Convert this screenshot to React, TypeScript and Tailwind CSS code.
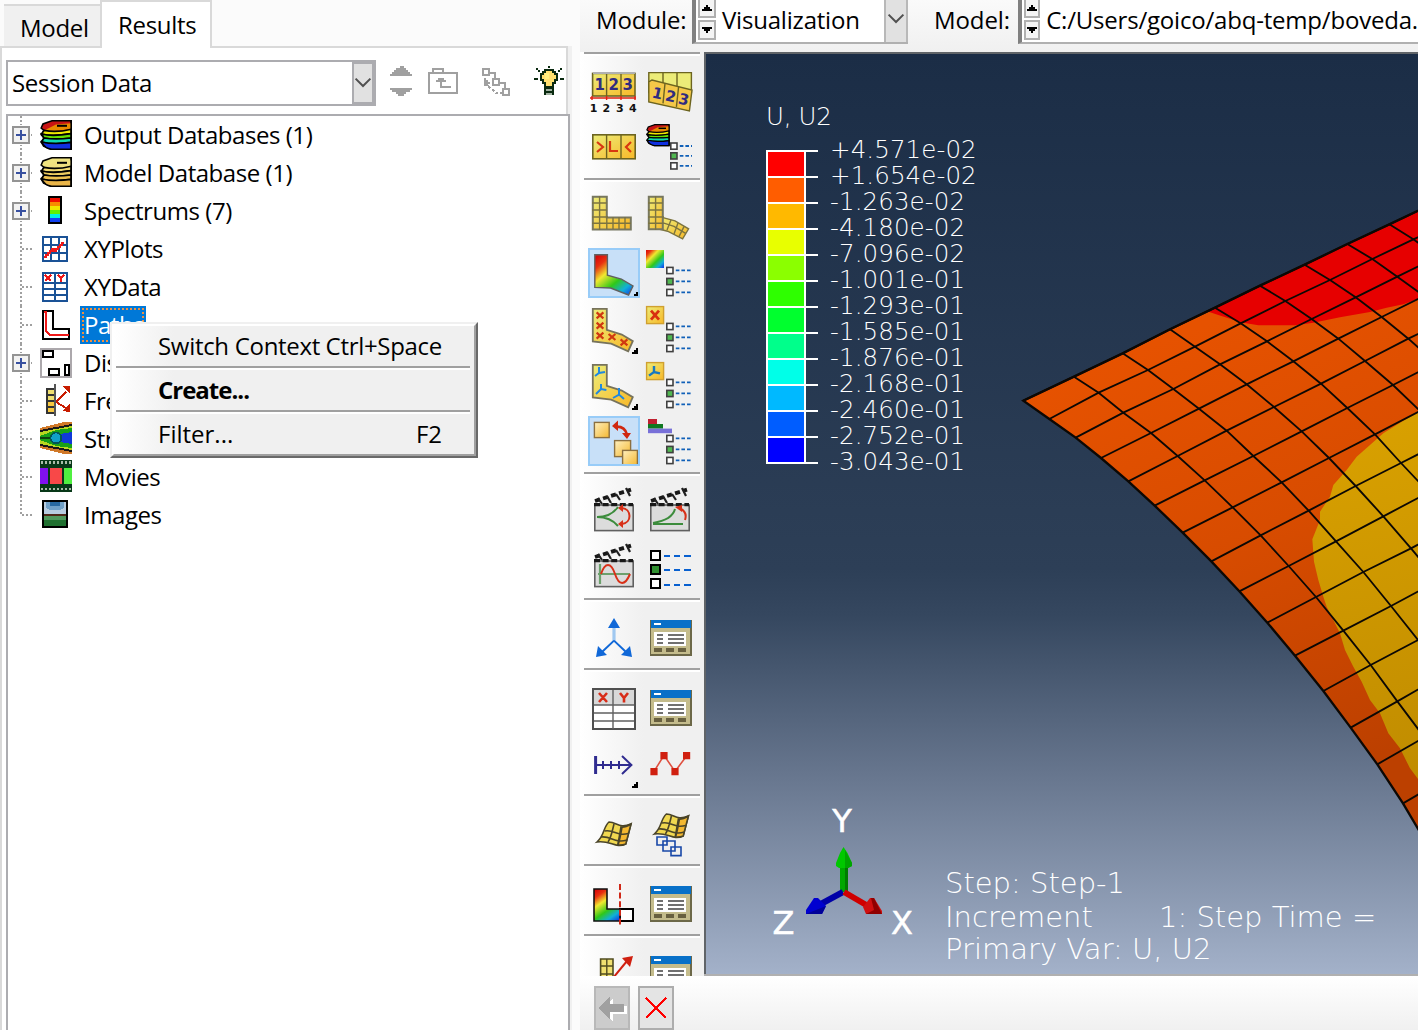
import React from "react";

type Pt = [number, number];

/* ---------- tree icons (16 x 16 grid, drawn at 2x) ---------- */

function TreeIcon({ children }: { children: React.ReactNode }) {
  return (
    <svg viewBox="0 0 16 16" className="mt-[2px] ml-[6px] h-8 w-8 shrink-0 overflow-visible" shapeRendering="crispEdges">
      {children}
    </svg>
  );
}

function DatabaseArt({ colors }: { colors: string[] }) {
  return (
    <g stroke="#000" strokeWidth="0.8" shapeRendering="auto">
      <path d="M15.6 .4H6L1.5 2 .6 4l1.4 1.2L.6 7.3 2 9 .6 11l1.2 2 3.6 1.6h10.2z" fill={colors[0]} />
      <path d="M2 5.2C5 6 9 5.6 15.6 4.4V1.6L8 2.2z" fill={colors[1]} stroke="none" />
      <path d="M.8 7c4 1 9 .7 14.8-.2V4.6C10 6 6 6 2 5.2z" fill={colors[2]} />
      <path d="M2 9c4 .8 8 .6 13.6 0V6.8C10 7.8 5 8.2 .8 7z" fill={colors[3]} />
      <path d="M.8 11c4 1 9 1 14.8.2V9C10 9.6 6 9.6 2 9z" fill={colors[4]} />
      <path d="M.8 11c1 2 3 3.4 5 3.6h9.8v-3.4C10 12 5 12 .8 11z" fill={colors[5]} />
      <path d="M8.5 2.4h5v1h-5z" fill="#000" stroke="none" />
      <path d="M15.6 .4v14.2" />
    </g>
  );
}

const RAINBOW_DB = ["#c81414", "#e88a00", "#f0e800", "#66e000", "#10d8b0", "#1030e0"];
const YELLOW_DB = ["#f0e480", "#f0e080", "#f0d870", "#eccb60", "#ecc050", "#eab548"];

const treeIcons: Record<string, React.ReactNode> = {
  odb: <DatabaseArt colors={RAINBOW_DB} />,
  mdb: <g transform="translate(0 -.5)"><DatabaseArt colors={YELLOW_DB} /></g>,
  spectrum: (
    <g>
      <path d="M4 0h7v14H4z" fill="#000" />
      <path d="M5 1h5v2H5z" fill="#f01000" />
      <path d="M5 3h5v2H5z" fill="#f88c00" />
      <path d="M5 5h5v2H5z" fill="#f0e800" />
      <path d="M5 7h5v2H5z" fill="#60f000" />
      <path d="M5 9h5v2H5z" fill="#00f0e0" />
      <path d="M5 11h5v2H5z" fill="#1040f0" />
    </g>
  ),
  xyplots: (
    <g fill="none">
      <path d="M1.5 1.5h12v12h-12zM5.5 1v13M9.5 1v13M1 5.5h13M1 9.5h13" stroke="#1a5296" />
      <path d="M2 11.5h1v-1h1v-1h1v-1h1v-1h1v1h1v-1h1v-1h1v-1h1v-1h1" stroke="#f01818" strokeWidth=".8" />
    </g>
  ),
  xydata: (
    <g fill="none">
      <path d="M1.5.5h12v14h-12zM7.5 0v15M1 5.5h13M1 8.5h13M1 11.5h13" stroke="#1a5296" />
      <path d="M2.5 1.5l3 3M5.500 1.500l-3 3M9 1.300l1.500 1.500L12 1.300M10.500 2.800v2" stroke="#f01818" />
    </g>
  ),
  path: (
    <g fill="#fff">
      <path d="M1.5.5h5v9h8v5h-13z" stroke="#000" />
      <path d="M2 1h1v9.500l2 2h9.500" stroke="#f01818" fill="none" strokeWidth=".9" />
    </g>
  ),
  display: (
    <g fill="#fff" stroke="#000">
      <path d="M.5.5h15v14H.5z" stroke="#aca8ac" />
      <path d="M1.500 1.500h5v3h-5zM4.500 10.500h5v3h-5zM12.500 8.500h2v5h-2z" />
    </g>
  ),
  freebody: (
    <g>
      <path d="M3 1h4v13H3z" fill="#333" />
      <path d="M4 2h3v2H4zM4 5h3v2H4z" fill="#f0e070" />
      <path d="M4 8h3v2H4zM4 11h3v2H4z" fill="#f8c840" />
      <path d="M7 -1h1v16H7z" fill="#555" />
      <path d="M8 8l5-5M8 8l5 3" stroke="#c81c00" strokeWidth=".9" />
      <path d="M11 0h4v4l-1.500-1.500zM11 12.500L15 9v4z" fill="#c81c00" />
    </g>
  ),
  streams: (
    <g>
      <path d="M0 2L12-1h4v16h-4L0 12z" fill="#d07828" />
      <path d="M0 3L16 0v14L0 11z" fill="#181818" />
      <path d="M0 4l16-3v12L0 10z" fill="#b8d820" />
      <path d="M0 6l8-3 8-1v10l-8-1-8-3z" fill="#18a018" />
      <path d="M10 5l6-1v6l-6-1z" fill="#1038d8" />
      <circle cx="8" cy="7" r="2.700" fill="#10a0c8" stroke="#055" strokeWidth=".8" />
      <path d="M0 7h5" stroke="#104010" strokeWidth=".7" />
    </g>
  ),
  movies: (
    <g>
      <path d="M0-1h16v16H0z" fill="#083818" />
      <path d="M.500.300h15M.500 13.400h15" stroke="#a8bca8" strokeWidth="1.200" strokeDasharray="1 1" />
      <path d="M0 3h4v8H0z" fill="#8010f0" />
      <path d="M5 3h6v8H5z" fill="#f84848" />
      <path d="M12 3h4v8h-4z" fill="#50f040" />
    </g>
  ),
  images: (
    <g>
      <path d="M1 0h13v14H1z" fill="#000" />
      <path d="M2 1h11v6H2z" fill="#b8cce0" />
      <path d="M3 1h9v3l-2 1H5L3 4z" fill="#70a0c8" />
      <path d="M5 1h5v2H5z" fill="#2868a0" />
      <path d="M2 7h11v1H2z" fill="#502818" />
      <path d="M2 8h11v2H2z" fill="#50985c" />
      <path d="M2 10h11v3H2z" fill="#207030" />
    </g>
  ),
};

const tree: { label: string; icon: string; plus?: boolean; selected?: boolean; track: string }[] = [
  { label: "Output Databases (1)", icon: "odb", plus: true, track: "tracking-[-0.45px]" },
  { label: "Model Database (1)", icon: "mdb", plus: true, track: "tracking-[-0.45px]" },
  { label: "Spectrums (7)", icon: "spectrum", plus: true, track: "tracking-[-0.45px]" },
  { label: "XYPlots", icon: "xyplots", track: "tracking-[-0.45px]" },
  { label: "XYData", icon: "xydata", track: "tracking-[-0.45px]" },
  { label: "Paths", icon: "path", selected: true, track: "tracking-[-0.45px]" },
  { label: "Display Groups", icon: "display", plus: true, track: "tracking-[-0.45px]" },
  { label: "Free Body Cuts", icon: "freebody", track: "tracking-[-0.45px]" },
  { label: "Streams", icon: "streams", track: "tracking-[-0.45px]" },
  { label: "Movies", icon: "movies", track: "tracking-[-0.45px]" },
  { label: "Images", icon: "images", track: "tracking-[-0.45px]" },
];

function TreeRow({ item, last }: { item: (typeof tree)[number]; last: boolean }) {
  return (
    <div className="flex h-[38px] items-center pl-1">
      <svg viewBox="0 0 13 19" className="h-[38px] w-[26px] shrink-0 -mr-1 overflow-visible" shapeRendering="crispEdges">
        <path d={last ? "M4.5 0V10" : "M4.500 0V19"} stroke="#a0a0a0" strokeDasharray="1 1" />
        <path d="M5 9.500h5" stroke="#a0a0a0" strokeDasharray="1 1" />
        {item.plus && (
          <g>
            <path d="M-.5 4.500H9.500V14.500H-.5z" fill="#fff" />
            <path d="M.5 5.500h8v8h-8z" fill="#f2f2f2" stroke="#949494" />
            <path d="M2 9.500h5M4.500 7v5" stroke="#3850a0" />
          </g>
        )}
      </svg>
      <TreeIcon>{treeIcons[item.icon]}</TreeIcon>
      {item.selected ? (
        <div className="ml-2 h-[38px] w-[66px] bg-[#0078d7] p-[2px]">
          <div className={`h-full border-2 border-dotted border-[#f09040] leading-[30px] text-white ${item.track}`}>
            {item.label}
          </div>
        </div>
      ) : (
        <span className={`ml-3 whitespace-nowrap ${item.track}`}>{item.label}</span>
      )}
    </div>
  );
}

/* ---------- left panel ---------- */

function Chevron() {
  return (
    <svg viewBox="0 0 9 6" className="h-3 w-[18px]" fill="none">
      <path d="M.8 .8L4.500 4.500 8.200.800" stroke="#505050" strokeWidth="1" />
    </svg>
  );
}

function ContextMenu() {
  return (
    <div className="absolute top-[322px] left-[110px] h-[136px] w-[368px] border-2 border-t-[#f0f0f0] border-r-[#696969] border-b-[#696969] border-l-[#f0f0f0]">
      <div className="flex h-full flex-col border-2 border-t-white border-r-[#a0a0a0] border-b-[#a0a0a0] border-l-white bg-linear-to-r from-white to-[#f0f0f0] to-[60px] pr-1">
        <div className="flex h-10 items-center justify-between pr-7 pl-11">
          <span className="tracking-[-0.3px]">Switch Context</span>
          <span className="tracking-[-0.3px]">Ctrl+Space</span>
        </div>
        <div className="ml-[2px] h-1 border-t-2 border-[#a0a0a0] bg-white" />
        <div className="flex h-10 items-center pl-11 font-bold tracking-[-1px]">Create...</div>
        <div className="ml-[2px] h-1 border-t-2 border-[#a0a0a0] bg-white" />
        <div className="flex h-10 items-center justify-between pr-7 pl-11">
          <span>Filter...</span>
          <span>F2</span>
        </div>
      </div>
    </div>
  );
}

function LeftPanel() {
  return (
    <div className="flex h-[1030px] w-[580px] shrink-0 flex-col bg-[#fbfbfb]">
      <div className="z-10 flex h-12 items-start pl-1">
        <div className="mt-1 flex h-[42px] w-24 items-center border-t-2 border-[#d9d9d9] bg-[#f0f0f0] pt-[3px] pl-4 tracking-[-0.3px]">Model</div>
        <div className="flex h-12 w-28 items-center border-2 border-b-0 border-[#d9d9d9] bg-white pl-4 tracking-[-0.3px]">Results</div>
      </div>
      <div className="-mt-[2px] flex h-[984px] w-[572px] border-r-4 border-[#f0f0f0]">
        <div className="flex w-[568px] flex-col border-t-2 border-l-2 border-[#d9d9d9] bg-white pl-1">
          <div className="flex h-[66px] items-start border-r-2 border-[#d9d9d9] pt-3">
            <div className="flex h-[46px] w-[370px] items-center justify-between border-2 border-[#acacb0] bg-white pl-1">
              <span className="tracking-[-0.3px]">Session Data</span>
              <div className="flex h-[42px] w-[22px] items-center justify-center border-2 border-t-[#acacb0] border-r-[#acacb0] border-b-[#acacb0] border-l-[#acacb0] bg-[#e1e1e1]">
                <Chevron />
              </div>
            </div>
            <svg viewBox="0 0 90 18" className="ml-2 h-9 w-[180px] overflow-visible" shapeRendering="crispEdges">
              <path d="M8 3h2v1h1v1h1v1h1v1h1v1H3V7h1V6h1V5h1V4h2zM3 14h11v1h-1v1h-2v1h-1v1H7v-1H6v-1H4v-1H3z" fill="#a0a0a0" transform="translate(0 0)" />
              <g fill="none" stroke="#a0a0a0">
                <path d="M22.500 6.500h14v10h-14zM24.500 6v-1.500h5v1.500" />
                <path d="M28.500 9v4.500h5M26 10.500h5M27 9.500h3" />
              </g>
              <g fill="none" stroke="#a0a0a0">
                <path d="M49.500 4.500h3v3h-3zM54.500 9.500h3v3h-3zM59.500 14.500h3v3h-3zM53 6.500h2.500v3M58 11.500h2.500v3" />
                <path d="M50 9h1v1h1v1h1v1h-1v1h-2z" fill="#a0a0a0" stroke="none" />
                <path d="M52 13l4 3.500h3" strokeDasharray="1.500 1" />
              </g>
              <g>
                <path d="M80.500 5h4v1h1v1h1v3h-1v1.500h-1v2h-4v-2h-1V10h-1V7h1V6h1z" fill="#ffe070" stroke="#0a2a10" />
                <path d="M80.500 6.500h2v3h-2z" fill="#fff080" />
                <path d="M80 13.500h5v4h-5z" fill="#0a2a10" />
                <path d="M81 15h3M81 17h3" stroke="#a0b0a0" strokeWidth=".8" />
                <path d="M82 3h1v1h-1zM76 4h1v1h1v1h-1v-1h-1zM88 4h1v1h-1v1h-1V5h1zM75 9h2v1h-2zM88 9h2v1h-2z" fill="#0a2a10" />
              </g>
            </svg>
          </div>
          <div className="h-[916px] w-[564px] border-2 border-b-0 border-[#acacb0] bg-white">
            {tree.map((item, i) => (
              <TreeRow key={item.label} item={item} last={i === tree.length - 1} />
            ))}
          </div>
        </div>
      </div>
    </div>
  );
}

/* ---------- toolbox icons (26 x 25 grid, drawn at 2x) ---------- */

const BLUE = "#1060b8";

function ListArt({ x = 11, ys = [9.5, 15, 20.5], s = 3.4 }: { x?: number; ys?: number[]; s?: number }) {
  return (
    <g>
      {ys.map((y, i) => (
        <g key={y}>
          <rect x={x + 0.4} y={y + 0.2} width={s - 0.3} height={s - 0.3} fill={i === 1 ? "#50b850" : "#fff"} stroke="#404040" strokeWidth=".8" />
          <path d={`M${x + s + 1.500} ${y + s / 2}H24`} stroke={BLUE} strokeWidth=".9" strokeDasharray="1.800 1" />
        </g>
      ))}
    </g>
  );
}

const BENT = "M2.400 2.400h7v10.500l7.500 2.400 5.500 3.300-2.300 5-8.500-3.800-9.200-1.100z";

function Clapper() {
  return (
    <g>
      <rect x="3.400" y="9.500" width="19.200" height="12.800" fill="#dcdcdc" stroke="#606060" strokeWidth=".8" />
      <path d="M3 7l19-5.500 .5 2.500L4 9.500z" fill="#f0f0f0" />
      <path d="M3 9.300h19.500" stroke="#181818" strokeWidth="1.600" strokeDasharray="3 1.300" />
      <path d="M3.500 7.500L21.500 1.800" stroke="#181818" strokeWidth="1.900" strokeDasharray="2.600 1.600" />
      <path d="M5 6l2 3M9.500 5l2 3.500M14 4l2 3M19 1l2 4" stroke="#202020" strokeWidth="1.100" />
    </g>
  );
}

function WindowArt() {
  return (
    <g shapeRendering="crispEdges">
      <path d="M3 4h21v18H3z" fill="#6c6848" />
      <path d="M3.500 8h19.500v13H3.500z" fill="#c4bc8c" />
      <path d="M3.500 4h20v4h-20z" fill="#0870c8" />
      <path d="M5 5.500h3.500v1H5z" fill="#fff" />
      <path d="M5 10h16v7H5z" fill="#fff" />
      <path d="M6.500 11.500h3M12 11.500h8M6.500 13.500h3M12 13.500h8M6.500 15.500h3M12 15.500h8" stroke="#707070" strokeWidth=".8" />
      <path d="M5 18h4v2H5zM11 18h4v2h-4zM17 18h4v2h-4z" fill="#686040" />
    </g>
  );
}

function SheetArt() {
  return (
    <g stroke="#4a4428" strokeWidth=".8">
      <path d="M6 .5C10 .5 11 4 17 1.500l-2.600 10C9 14 7 9.500 0 10.500 4 7 3 3 6 .500z" fill="#f0d850" />
      <path d="M12 3c2 .300 3-.300 5-1.500l-2.600 10c-1.500.600-2.600.700-4 .500z" fill="#f4b830" />
      <path d="M8.500 1.500c-1 4-1.500 7-3 9M12.500 3c-.500 3-1 6-2 9M3.800 5c5-1 6 3 11.800 1.200M2 8c5-.800 7 3.500 13 1.500" fill="none" />
    </g>
  );
}

const toolArt: Record<string, React.ReactNode> = {
  nodes: (
    <g>
      <rect x="2.300" y="3.700" width="21.200" height="11.300" fill="url(#yel)" stroke="#6c6420" strokeWidth=".8" />
      <path d="M2.500 3.500h21" stroke="#b0b0b0" />
      <path d="M9.300 4v11M16.500 4v11" stroke="#6c6420" strokeWidth=".7" />
      <g className="font-['DejaVu_Sans'] font-bold" fontSize="7.500" fill="#302c80">
        <text x="3.200" y="12">1</text><text x="10.200" y="12">2</text><text x="17.300" y="12">3</text>
      </g>
      <path d="M1 16h23M2 15v2M9.300 15v2M16.500 15v2M23.500 15v2" stroke="#e02010" strokeWidth=".7" />
      <g className="font-['DejaVu_Sans'] font-bold" fontSize="5.500" fill="#111">
        <text x="0.900" y="23">1</text><text x="7.300" y="23">2</text><text x="14" y="23">3</text><text x="20.500" y="23">4</text>
      </g>
    </g>
  ),
  nodesBent: (
    <g stroke="#6c6420" strokeWidth=".7">
      <path d="M2.400 3.300h21.300v10H2.400z" fill="#ecec78" />
      <path d="M9.500 3.300v8M16.500 3.300v8" />
      <path d="M2.400 8v10l20.300 4.500L24 12 4 7z" fill="#f4c848" />
      <path d="M10.500 8.700l-1 10M17.300 10.400l-1.100 10" />
      <g className="font-['DejaVu_Sans'] font-bold" fontSize="7.500" fill="#302c80" stroke="none" transform="rotate(13 3 16)">
        <text x="3.500" y="15.500">1</text><text x="10.300" y="15.500">2</text><text x="17" y="15.500">3</text>
      </g>
    </g>
  ),
  elements: (
    <g>
      <rect x="2.400" y="6.400" width="21.200" height="12" fill="url(#yel)" stroke="#6c6420" strokeWidth=".8" />
      <path d="M9.300 6.500v12M16.500 6.500v12" stroke="#6c6420" strokeWidth=".7" />
      <path d="M4.500 10l3 2.500-3 2.500M11 9.500v5h4M21.500 10l-2.500 2.500 2.500 2.500" stroke="#d83810" strokeWidth="1.100" fill="none" />
    </g>
  ),
  odbOptions: (
    <g>
      <g transform="translate(1 1) scale(.74)"><DatabaseArt colors={RAINBOW_DB} /></g>
      <ListArt x={13} ys={[10.300, 15.200, 20.200]} s={3.400} />
    </g>
  ),
  undeformed: (
    <g stroke="#7c7440" strokeWidth=".7" fill="url(#yel)">
      <path d="M2.400 2.400h7v10.300h12v6h-19z" stroke="#777760" strokeWidth="1" />
      <path d="M5.800 2v17M2 5.500h7.500M2 9h7.500M2 12.500h8M2 15.600h19.500M9.400 12.500v6M12.500 12.500v6M15.500 12.500v6M18.500 12.500v6" fill="none" />
    </g>
  ),
  deformed: (
    <g stroke="#7c7440" strokeWidth=".7" fill="url(#yel)">
      <path d="M9.500 12.800l6 1.600 6.800 4-3 5-7.500-3.800-4-1z" />
      <path d="M2.400 2.400h7v16.200h-7z" stroke="#777760" strokeWidth="1" />
      <path d="M5.800 2v17M2 5.500h7.500M2 9h7.500M2 12.500h8M2 15.600h8l5 1.600 5.800 3.500M13.500 14l-2 5M17 15.500l-2 5.500M20 17.300l-2.500 5" fill="none" />
    </g>
  ),
  contour: (
    <g>
      <path d="M3.400 3.400h6.300v10.200l7 2 5.800 3.400-2.200 4.500-9-3.500-7.900-.300z" fill="url(#spec)" stroke="#606060" strokeWidth=".7" />
      <path d="M25 22v3h-3v-1h1v-1h1v-1z" fill="#000" />
    </g>
  ),
  contourOpt: (
    <g><rect x="1" y="1" width="9" height="9" fill="url(#spec2)" /><ListArt /></g>
  ),
  symbols: (
    <g>
      <path d={BENT} fill="url(#yel)" stroke="#77735c" strokeWidth=".9" />
      <path d="M4.300 4.200l3.400 3m0-3l-3.400 3M4.300 9.300l3.400 3m0-3l-3.400 3M4.300 14.300l3.400 3m0-3l-3.400 3M10.300 15l3.400 3m0-3l-3.400 3M16.300 17.700l3.400 3m0-3l-3.400 3" stroke="#d03810" strokeWidth="1.100" />
      <path d="M25 22v3h-3v-1h1v-1h1v-1z" fill="#000" />
    </g>
  ),
  symbolsOpt: (
    <g>
      <rect x="1.300" y="1.300" width="8.500" height="8.500" fill="url(#yel)" stroke="#d0a030" strokeWidth=".7" />
      <path d="M3.500 3.300l4 4.500m0-4.500l-4 4.500" stroke="#d83010" strokeWidth="1.400" />
      <ListArt />
    </g>
  ),
  orient: (
    <g>
      <path d={BENT} fill="url(#yel)" stroke="#77735c" strokeWidth=".9" />
      <path d="M5.500 3.500v3.500M3.500 8l2-1.500 3-.500M6.500 12v3M4 17l2.500-2.500 2.700 .500M15.500 14v3.500M12.500 19l3-1.700 2.500 2.200" stroke="#2088e0" fill="none" />
      <path d="M25 22v3h-3v-1h1v-1h1v-1z" fill="#000" />
    </g>
  ),
  orientOpt: (
    <g>
      <rect x="1.300" y="1.300" width="8.500" height="8.500" fill="url(#yel)" stroke="#d0a030" strokeWidth=".7" />
      <path d="M5 3v3M2.500 7.800L5 6l3 .700" stroke="#1878c0" fill="none" strokeWidth="1.200" />
      <ListArt />
    </g>
  ),
  multi: (
    <g fill="url(#yel2)" stroke="#8c7040" strokeWidth=".7">
      <rect x="3.200" y="3.200" width="7.400" height="7.600" />
      <rect x="13.300" y="12.300" width="8" height="8" />
      <rect x="17.300" y="17.200" width="7.400" height="7.400" />
      <path d="M14.500 5.300q4 0 5 4" stroke="#d02810" fill="none" strokeWidth="1.300" />
      <path d="M12 5l3-2.700v5.200zM19.500 11.500l-2.500-3h4.500z" fill="#d02810" stroke="none" />
    </g>
  ),
  multiOpt: (
    <g>
      <path d="M2 1.500h4.500v2.500H2z" fill="#c02030" />
      <path d="M2 4h7.500v2.300H2z" fill="#107820" />
      <path d="M2 6.300h12v2.300H2z" fill="#7870d8" />
      <ListArt />
    </g>
  ),
  animScale: (
    <g>
      <Clapper />
      <path d="M4.500 15.500c5 0 8-1.500 10.500-5M4.500 15.500c5 0 8 1.500 10.500 4.500" stroke="#3c8c3c" fill="none" />
      <path d="M17 11c5 .500 5 7.500 0 8" stroke="#d83018" fill="none" />
      <path d="M15 11l2.500-2v4zM15 19l2.500-2v4z" fill="#d83018" />
    </g>
  ),
  animTime: (
    <g>
      <Clapper />
      <path d="M4.500 19h15M4.500 18.500c6-1 10-3 11-7" stroke="#3c8c3c" fill="none" />
      <path d="M20.500 17c1-3-.500-5-3-6" stroke="#d83018" fill="none" />
      <path d="M15.500 10.500l3.500-1v3.500z" fill="#d83018" />
    </g>
  ),
  animHarm: (
    <g>
      <Clapper />
      <path d="M6 11v10M5 16h16" stroke="#6ca06c" strokeWidth="1.100" />
      <path d="M6.500 16c2-6 5-6 7 0s5 6 7.500 0" stroke="#d83018" fill="none" />
    </g>
  ),
  animOpt: (
    <g shapeRendering="crispEdges">
      <path d="M3.500 4.500h4.500v4.500H3.500zM3.500 18.500h4.500v4.500H3.500z" fill="#fff" stroke="#000" />
      <path d="M3.500 11.500h4.500v4.500H3.500z" fill="#309030" stroke="#000" />
      <path d="M10 6.800h3m2 0h3m2 0h3.500M10 13.800h3m2 0h3m2 0h3.500M10 21.300h3m2 0h3m2 0h3.500" stroke="#0860d0" />
    </g>
  ),
  triad: (
    <g>
      <path d="M13 14.300V7" stroke="#a0c8f0" strokeWidth="1.600" />
      <path d="M13 14.300L7 20M13 14.300l6 5.700" stroke="#1068d8" />
      <path d="M13 3l3 5h-6zM4 22.500l1-5.500 4.500 4.500zM22 22.500l-1-5.500-4.500 4.500z" fill="#1068d8" />
    </g>
  ),
  window: <WindowArt />,
  xytable: (
    <g>
      <rect x="2.500" y="3.500" width="21" height="20" fill="#fff" stroke="#505050" />
      <path d="M3 4h20v7.500H3z" fill="#d8d8d8" />
      <path d="M3 11.500h20M3 15.500h20M3 19.500h20M12.500 4v19.500" stroke="#606060" strokeWidth=".7" />
      <path d="M5.500 5.500l4 4.500m0-4.500l-4 4.500M16 5.500l2 2.500 2-2.500M18 8v2.300" stroke="#d82c18" strokeWidth="1.300" fill="none" />
    </g>
  ),
  pathArrow: (
    <g>
      <path d="M3.800 9v9" stroke="#302c90" strokeWidth="1.500" />
      <path d="M4 13.500h17.500M7.500 11.500v4M11.500 11.500v4M15.500 11.500v4M17 9l4.700 4.500L17 18" stroke="#302c90" fill="none" />
      <path d="M25 22v3h-3v-1h1v-1h1v-1z" fill="#000" />
    </g>
  ),
  xyplot: (
    <g>
      <path d="M5 16.700l5-8 5.500 8 6-8" stroke="#e05040" fill="none" strokeWidth=".8" />
      <path d="M3.200 15h3.600v3.600H3.200zM8.200 7h3.600v3.600H8.200zM13.700 15h3.600v3.600h-3.600zM19.500 7h3.600v3.600h-3.600z" fill="#d02010" />
    </g>
  ),
  sheet: <g transform="translate(4.500 6.500)"><SheetArt /></g>,
  sheets: (
    <g>
      <g transform="translate(5.200 2.500)"><SheetArt /></g>
      <path d="M6.500 14.500h5v4h-5zM9.500 16.500h6v5h-6zM13.500 19.500h5v4.300h-5z" fill="none" stroke="#1848a8" strokeWidth=".8" />
    </g>
  ),
  viewCut: (
    <g>
      <path d="M16 15.500h6.500v6H16z" fill="#fff" stroke="#000" />
      <path d="M3 5.500h6.500v10H16v6H3z" fill="url(#spec3)" stroke="#111" strokeWidth=".8" />
      <path d="M16 3v21" stroke="#d02818" strokeDasharray="3 1.300" />
    </g>
  ),
  freeBody: (
    <g>
      <path d="M6.300 5.500h6.200v12H6.300z" fill="#f0e070" stroke="#504c20" strokeWidth=".8" />
      <path d="M9.400 5.500v12M6 9h6.500M6 13h6.500" stroke="#504c20" strokeWidth=".7" />
      <path d="M12.500 15l7-8.500" stroke="#d02010" />
      <path d="M17 5l5.500-1-1.500 5.500z" fill="#d02010" />
    </g>
  ),
};

const groups: { tools: string[]; active?: string[]; last?: boolean }[] = [
  { tools: ["nodes", "nodesBent", "elements", "odbOptions"] },
  {
    tools: ["undeformed", "deformed", "contour", "contourOpt", "symbols", "symbolsOpt", "orient", "orientOpt", "multi", "multiOpt"],
    active: ["contour", "multi"],
  },
  { tools: ["animScale", "animTime", "animHarm", "animOpt"] },
  { tools: ["triad", "window"] },
  { tools: ["xytable", "window", "pathArrow", "xyplot"] },
  { tools: ["sheet", "sheets"] },
  { tools: ["viewCut", "window"] },
  { tools: ["freeBody", "window"], last: true },
];

function Toolbox() {
  return (
    <div className="h-[924px] w-[124px] shrink-0 overflow-hidden bg-linear-to-r from-white to-[#f0f0f0] to-[64px] pl-1">
      {groups.map((g, gi) => (
        <div key={gi} className="w-[116px] border-t-2 border-[#a0a0a0]">
          <div className="h-[2px] bg-white" />
          <div className="grid grid-cols-[52px_52px] gap-x-1 gap-y-[6px] px-1 pt-[10px] pb-[6px]">
            {g.tools.map((t, i) => (
              <div key={i} className={g.active?.includes(t) ? "h-[50px] w-[52px] bg-[#c8e0f8] outline-2 -outline-offset-2 outline-[#98ccf8]" : "h-[50px] w-[52px]"}>
                <svg viewBox="0 0 26 25" className="h-[50px] w-[52px] overflow-visible">{toolArt[t]}</svg>
              </div>
            ))}
          </div>
        </div>
      ))}
    </div>
  );
}

/* ---------- module bar ---------- */

function Spinner() {
  return (
    <div className="flex w-[18px] flex-col">
      <div className="flex h-[18px] items-center justify-center border-2 border-t-0 border-[#b0b0b0] bg-[#f4f4f4]">
        <svg viewBox="0 0 5 3" className="h-[6px] w-[10px]" shapeRendering="crispEdges"><path d="M2 0h1v1h1v1h1v1H0V2h1V1h1z" /></svg>
      </div>
      <div className="mt-[2px] flex h-5 items-center justify-center border-2 border-[#b0b0b0] bg-[#f4f4f4]">
        <svg viewBox="0 0 5 3" className="h-[6px] w-[10px]" shapeRendering="crispEdges"><path d="M0 0h5v1H4v1H3v1H2V2H1V1H0z" /></svg>
      </div>
    </div>
  );
}

function ModuleBar() {
  return (
    <div className="flex h-[52px] items-start bg-linear-to-b from-[#fafafa] to-[#f0f0f0]">
      <span className="w-[112px] pt-1 pl-4 tracking-[-0.1px]">Module:</span>
      <div className="flex h-11 w-[216px] border-b-2 border-l-4 border-b-[#b0b0b0] border-l-[#808080] bg-white pl-[2px]">
        <Spinner />
        <span className="grow pt-1 pl-[6px] tracking-[-0.2px]">Visualization</span>
        <div className="flex h-[42px] w-6 items-center justify-center border-x-2 border-[#b8b8b8] bg-[#e1e1e1] pb-1">
          <Chevron />
        </div>
      </div>
      <span className="w-[110px] pt-1 pl-[26px] tracking-[-0.1px]">Model:</span>
      <div className="flex h-11 w-[400px] border-b-2 border-l-4 border-b-[#b0b0b0] border-l-[#808080] bg-white pl-[2px]">
        <Spinner />
        <span className="overflow-hidden pt-1 pl-[6px] tracking-[-0.2px] whitespace-nowrap">C:/Users/goico/abq-temp/boveda.odb</span>
      </div>
    </div>
  );
}

/* ---------- viewport ---------- */

const LEGEND_COLORS = ["#ff0000", "#ff5d00", "#ffb900", "#e8ff00", "#8bff00", "#2eff00", "#00ff2e", "#00ff8b", "#00ffe8", "#00b9ff", "#005dff", "#0000ff"];
const LEGEND_LABELS = ["+4.571e-02", "+1.654e-02", "-1.263e-02", "-4.180e-02", "-7.096e-02", "-1.001e-01", "-1.293e-01", "-1.585e-01", "-1.876e-01", "-2.168e-01", "-2.460e-01", "-2.752e-01", "-3.043e-01"];

function Legend() {
  return (
    <div className="absolute top-[48px] left-[60px] font-['DejaVu_Sans',sans-serif] text-[24.500px] font-extralight text-white">
      <div className="h-[48px] leading-[30px] tracking-[-0.3px]">U, U2</div>
      <div className="flex">
        <div className="w-[52px]">
          {LEGEND_COLORS.map((c) => (
            <div key={c} className="h-[26px] border-t-2 border-white">
              <div className="h-6 w-10 border-x-2 border-white" style={{ backgroundColor: c }} />
            </div>
          ))}
          <div className="h-[2px] bg-white" />
        </div>
        <div className="-mt-[13px] ml-3">
          {LEGEND_LABELS.map((l) => (
            <div key={l} className="h-[26px] leading-[26px] tracking-[0.1px]">{l}</div>
          ))}
        </div>
      </div>
    </div>
  );
}

/* Mesh node positions, one array per row, in thirds of a pixel. */
const MESH: Pt[][] = [
  [[40, 602], [192, 530], [338, 460], [480, 388], [615, 323], [750, 257], [884, 194], [1012, 132], [1138, 73], [1262, 14]],
  [[118, 657], [266, 578], [414, 510], [555, 440], [692, 370], [826, 303], [960, 240], [1087, 177], [1210, 118], [1330, 62]],
  [[197, 713], [340, 638], [490, 567], [630, 493], [771, 424], [905, 357], [1037, 292], [1162, 230], [1285, 170]],
  [[273, 774], [423, 699], [567, 626], [710, 553], [850, 484], [985, 416], [1115, 351], [1242, 288]],
  [[355, 844], [503, 768], [650, 692], [792, 621], [933, 551], [1065, 483], [1195, 416], [1320, 355]],
  [[434, 917], [584, 841], [730, 768], [875, 694], [1012, 624], [1149, 555], [1278, 489]],
  [[518, 998], [668, 922], [815, 847], [957, 774], [1095, 703], [1230, 633]],
  [[604, 1084], [752, 1006], [896, 932], [1037, 858], [1173, 789], [1305, 722]],
  [[688, 1174], [836, 1098], [978, 1024], [1120, 949], [1256, 877]],
  [[772, 1268], [918, 1191], [1060, 1116], [1203, 1045], [1335, 975]],
  [[855, 1367], [1000, 1292], [1143, 1218], [1284, 1142]],
  [[940, 1473], [1082, 1395], [1224, 1320]],
  [[1022, 1583], [1162, 1504], [1302, 1424]],
  [[1102, 1693], [1243, 1612]],
  [[1179, 1810], [1320, 1728]],
  [[1250, 1930]],
];

const toPath = (pts: Pt[]) => "M" + pts.map((p) => p.join(" ")).join("L");

function Mesh() {
  const edge = MESH.map((r) => r[0]);
  const outline = [...[...edge].reverse(), ...MESH[0]];
  const columns = Array.from({ length: 9 }, (_, j) => MESH.filter((r) => r[j + 1]).map((r) => r[j + 1]));
  return (
    <svg viewBox="0 0 1224 2322" className="absolute top-[146px] left-[304px] h-[774px] w-[408px]">
      <defs>
        <linearGradient id="mo" x1="0" y1="600" x2="500" y2="1900" gradientUnits="userSpaceOnUse">
          <stop offset="0" stopColor="#e65200" /><stop offset=".45" stopColor="#d84c00" /><stop offset="1" stopColor="#bc4000" />
        </linearGradient>
        <linearGradient id="mg" x1="1000" y1="700" x2="1200" y2="1750" gradientUnits="userSpaceOnUse">
          <stop offset="0" stopColor="#d8a000" /><stop offset="1" stopColor="#c08c00" />
        </linearGradient>
        <clipPath id="mc"><path d={toPath(outline) + "L1300 1930Z"} /></clipPath>
      </defs>
      <g clipPath="url(#mc)">
        <path d="M0 0H1300V2000H0z" fill="url(#mo)" />
        <path d="M580 330L625 345 665 358 700 368 745 376H855L910 368 990 352 1080 336 1130 323 1180 313 1224 297V0H580z" fill="#e60000" />
        <path d="M1230 636L1180 662 1120 700 1080 735 1040 770 1010 810 970 855 960 890 930 935V960L907 1018 912 1085 925 1140 940 1190 950 1220 970 1260 990 1300 1005 1350 1030 1400 1055 1445 1080 1500 1110 1540 1135 1600 1170 1645 1200 1705 1230 1745z" fill="url(#mg)" />
      </g>
      <g fill="none" stroke="#0c0804" strokeWidth="5.500">
        {MESH.map((r, i) => <path key={`r${i}`} d={toPath(r)} />)}
        {columns.map((c, i) => <path key={`c${i}`} d={toPath(c)} />)}
        <path d={toPath(outline)} strokeWidth="7" />
      </g>
    </svg>
  );
}

function Triad() {
  return (
    <svg viewBox="760 800 160 140" className="absolute top-[746px] left-[54px] h-[140px] w-[160px]">
      <path d="M840 866h8v26h-8z" fill="#00a800" />
      <path d="M845 866h3v26h-3z" fill="#007c00" />
      <path d="M843.500 847l4 6 4.500 10v3l-4 2h-9l-3-2v-3l4-10z" fill="#00c800" />
      <path d="M845 850l7 13v3l-4 2h-3z" fill="#00a400" />
      <path d="M843 892l-24 13" stroke="#0000a8" strokeWidth="6" />
      <path d="M844 892l24 14" stroke="#d00000" strokeWidth="6" />
      <path d="M806 914v-4l8-12h4l8 8-4 8z" fill="#0000d0" />
      <path d="M806 914l20-8-4 8z" fill="#000098" />
      <path d="M882 914v-3l-8-13h-4l-7 9 3 7z" fill="#d01010" />
      <path d="M882 914l-8-16h-3l3 12-8 4z" fill="#900000" />
      <g className="font-['DejaVu_Sans']" fontSize="32" fill="#fff" stroke="#fff" strokeWidth=".5" textAnchor="middle">
        <text x="842" y="832">Y</text>
        <text x="783.500" y="934">Z</text>
        <text x="902" y="934">X</text>
      </g>
    </svg>
  );
}

function Viewport() {
  return (
    <div className="relative h-[922px] w-[714px] overflow-hidden border-t-2 border-l-2 border-[#606468] bg-[linear-gradient(to_bottom,#1b2d46_0%,#2d3f57_56%,#35475f_61%,#66758d_78%,#a3b1c9_100%)]">
      <Legend />
      <Mesh />
      <Triad />
      <div className="absolute top-[813px] left-[239px] font-['DejaVu_Sans',sans-serif] text-[29px] leading-[33px] font-extralight whitespace-pre text-white">
        <div className="h-[34px]">Step: Step-1</div>
        <div className="flex h-[32px]">
          <span className="w-[214px]">Increment</span>
          <span>1: Step Time =</span>
        </div>
        <div>Primary Var: U, U2</div>
      </div>
    </div>
  );
}

function PromptBar() {
  return (
    <div className="flex h-[54px] items-start bg-linear-to-b from-white to-[#f0f0f0] pt-[10px] pl-[14px]">
      <div className="flex h-11 w-9 items-center justify-center border-2 border-[#b8b8b8] bg-[#cccccc]">
        <svg viewBox="0 0 16 14" className="h-7 w-8" shapeRendering="crispEdges">
          <path d="M2 7.500l6-6v4h7v4H8v4z" fill="#fff" transform="translate(.6 .6)" />
          <path d="M1 7l6-6v4h7v4H7v4z" fill="#a0a0a0" />
        </svg>
      </div>
      <div className="ml-2 flex h-11 w-9 items-center justify-center border-2 border-[#adadad] bg-[#e4e4e4]">
        <svg viewBox="0 0 11 11" className="h-[22px] w-[22px]" shapeRendering="crispEdges">
          <path d="M.5 .5l10 10M10.500.500L.500 10.500" stroke="#ff0000" strokeWidth="1.400" />
        </svg>
      </div>
    </div>
  );
}

function SharedDefs() {
  const spectrum = (
    <>
      <stop offset="0" stopColor="#d80808" /><stop offset=".15" stopColor="#e83010" /><stop offset=".35" stopColor="#f0e830" />
      <stop offset=".6" stopColor="#30c818" /><stop offset=".8" stopColor="#10b0d8" /><stop offset="1" stopColor="#1030e8" />
    </>
  );
  return (
    <svg className="absolute h-0 w-0">
      <defs>
        <linearGradient id="yel" x1="0" y1="0" x2="1" y2="1"><stop offset="0" stopColor="#ecec78" /><stop offset="1" stopColor="#f8b828" /></linearGradient>
        <linearGradient id="yel2" x1="0" y1="0" x2="1" y2="1"><stop offset="0" stopColor="#fff0c0" /><stop offset="1" stopColor="#f4b830" /></linearGradient>
        <linearGradient id="spec" x1="5" y1="4" x2="22" y2="24" gradientUnits="userSpaceOnUse">{spectrum}</linearGradient>
        <linearGradient id="spec2" x1="0" y1="0" x2="1" y2="1">{spectrum}</linearGradient>
        <linearGradient id="spec3" x1="4" y1="6" x2="15" y2="22" gradientUnits="userSpaceOnUse">{spectrum}</linearGradient>
      </defs>
    </svg>
  );
}

export default function App() {
  return (
    <div className="relative flex h-[1030px] w-[1418px] overflow-hidden bg-white font-['Open_Sans','Noto_Sans',sans-serif] text-[24px] leading-8 text-black">
      <SharedDefs />
      <LeftPanel />
      <div className="flex w-[838px] flex-col">
        <ModuleBar />
        <div className="flex h-[924px]">
          <Toolbox />
          <div className="flex flex-col">
            <Viewport />
            <div className="h-[2px] bg-[#b0b0b0]" />
          </div>
        </div>
        <PromptBar />
      </div>
      <ContextMenu />
    </div>
  );
}
